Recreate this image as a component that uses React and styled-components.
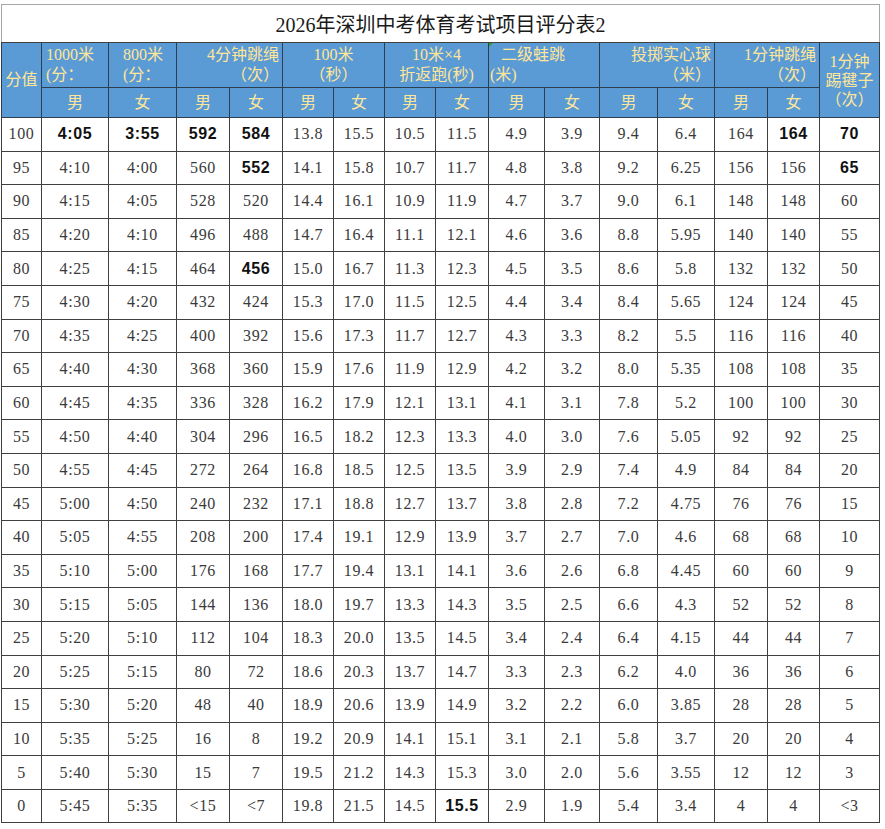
import React from "react";
import styled, { createGlobalStyle } from "styled-components";

const Global = createGlobalStyle`
  html, body { margin: 0; padding: 0; background: #ffffff; }
  body { font-family: "Liberation Serif", "Noto Sans CJK SC", serif; }
`;

const Page = styled.div`
  padding: 4px 0 0 1px;
`;

const Table = styled.table`
  border-collapse: collapse;
  table-layout: fixed;
  width: 878px;
  font-family: "Liberation Serif", "Noto Sans CJK SC", serif;
`;

const TitleCell = styled.td`
  height: 38px;
  box-sizing: border-box;
  padding: 0;
  border: 1px solid #a6a6a6;
  border-bottom: 1px solid #404040;
  text-align: center;
  font-size: 20px;
  color: #1a1a1a;
  background: #ffffff;
`;

const HeadCell = styled.td`
  position: relative;
  box-sizing: border-box;
  height: ${(p) => p.$h || 45}px;
  padding: ${(p) => (p.$align === "right" ? "0 3px 0 0" : "0")};
  background: #5b9bd5;
  color: #ffe699;
  border: 1px solid #2d3e50;
  font-size: 16px;
  line-height: ${(p) => p.$lh || 20}px;
  text-align: ${(p) => p.$align || "center"};
  vertical-align: middle;
  white-space: nowrap;
  overflow: hidden;
`;

const Line = styled.div`
  padding-left: ${(p) => p.$indent || 0}px;
`;

const Mark = styled.span`
  position: absolute;
  left: 0;
  top: 0;
  width: 0;
  height: 0;
  border-top: 4px solid #2e9d3a;
  border-right: 4px solid transparent;
`;

const Cell = styled.td`
  box-sizing: border-box;
  height: 33.6px;
  padding: 0;
  border: 1px solid #404040;
  text-align: center;
  vertical-align: middle;
  font-size: 16px;
  letter-spacing: 0.6px;
  color: ${(p) => (p.$bold ? "#111111" : "#3a3a3a")};
  font-family: ${(p) =>
    p.$bold ? '"Liberation Sans", Arial, sans-serif' : '"Liberation Serif", serif'};
  font-weight: ${(p) => (p.$bold ? 700 : 400)};
  background: #ffffff;
`;

const widths = [40, 67, 68, 53, 53, 51, 51, 51, 53, 56, 55, 58, 57, 53, 52, 60];

const rows = [
  ["100", "4:05", "3:55", "592", "584", "13.8", "15.5", "10.5", "11.5", "4.9", "3.9", "9.4", "6.4", "164", "164", "70"],
  ["95", "4:10", "4:00", "560", "552", "14.1", "15.8", "10.7", "11.7", "4.8", "3.8", "9.2", "6.25", "156", "156", "65"],
  ["90", "4:15", "4:05", "528", "520", "14.4", "16.1", "10.9", "11.9", "4.7", "3.7", "9.0", "6.1", "148", "148", "60"],
  ["85", "4:20", "4:10", "496", "488", "14.7", "16.4", "11.1", "12.1", "4.6", "3.6", "8.8", "5.95", "140", "140", "55"],
  ["80", "4:25", "4:15", "464", "456", "15.0", "16.7", "11.3", "12.3", "4.5", "3.5", "8.6", "5.8", "132", "132", "50"],
  ["75", "4:30", "4:20", "432", "424", "15.3", "17.0", "11.5", "12.5", "4.4", "3.4", "8.4", "5.65", "124", "124", "45"],
  ["70", "4:35", "4:25", "400", "392", "15.6", "17.3", "11.7", "12.7", "4.3", "3.3", "8.2", "5.5", "116", "116", "40"],
  ["65", "4:40", "4:30", "368", "360", "15.9", "17.6", "11.9", "12.9", "4.2", "3.2", "8.0", "5.35", "108", "108", "35"],
  ["60", "4:45", "4:35", "336", "328", "16.2", "17.9", "12.1", "13.1", "4.1", "3.1", "7.8", "5.2", "100", "100", "30"],
  ["55", "4:50", "4:40", "304", "296", "16.5", "18.2", "12.3", "13.3", "4.0", "3.0", "7.6", "5.05", "92", "92", "25"],
  ["50", "4:55", "4:45", "272", "264", "16.8", "18.5", "12.5", "13.5", "3.9", "2.9", "7.4", "4.9", "84", "84", "20"],
  ["45", "5:00", "4:50", "240", "232", "17.1", "18.8", "12.7", "13.7", "3.8", "2.8", "7.2", "4.75", "76", "76", "15"],
  ["40", "5:05", "4:55", "208", "200", "17.4", "19.1", "12.9", "13.9", "3.7", "2.7", "7.0", "4.6", "68", "68", "10"],
  ["35", "5:10", "5:00", "176", "168", "17.7", "19.4", "13.1", "14.1", "3.6", "2.6", "6.8", "4.45", "60", "60", "9"],
  ["30", "5:15", "5:05", "144", "136", "18.0", "19.7", "13.3", "14.3", "3.5", "2.5", "6.6", "4.3", "52", "52", "8"],
  ["25", "5:20", "5:10", "112", "104", "18.3", "20.0", "13.5", "14.5", "3.4", "2.4", "6.4", "4.15", "44", "44", "7"],
  ["20", "5:25", "5:15", "80", "72", "18.6", "20.3", "13.7", "14.7", "3.3", "2.3", "6.2", "4.0", "36", "36", "6"],
  ["15", "5:30", "5:20", "48", "40", "18.9", "20.6", "13.9", "14.9", "3.2", "2.2", "6.0", "3.85", "28", "28", "5"],
  ["10", "5:35", "5:25", "16", "8", "19.2", "20.9", "14.1", "15.1", "3.1", "2.1", "5.8", "3.7", "20", "20", "4"],
  ["5", "5:40", "5:30", "15", "7", "19.5", "21.2", "14.3", "15.3", "3.0", "2.0", "5.6", "3.55", "12", "12", "3"],
  ["0", "5:45", "5:35", "<15", "<7", "19.8", "21.5", "14.5", "15.5", "2.9", "1.9", "5.4", "3.4", "4", "4", "<3"],
];

const bold = new Set(["0-1", "0-2", "0-3", "0-4", "0-14", "0-15", "1-4", "1-15", "4-4", "20-8"]);

const genders = ["男", "女", "男", "女", "男", "女", "男", "女", "男", "女", "男", "女", "男", "女"];

export default function App() {
  return (
    <Page>
      <Global />
      <Table>
        <colgroup>
          {widths.map((w, i) => (
            <col key={i} style={{ width: w }} />
          ))}
        </colgroup>
        <tbody>
          <tr>
            <TitleCell colSpan={16}>2026年深圳中考体育考试项目评分表2</TitleCell>
          </tr>
          <tr>
            <HeadCell rowSpan={2} $h={75}>分值</HeadCell>
            <HeadCell $align="left">
              <Line $indent={4}>1000米</Line>
              <Line $indent={4}>(分：</Line>
            </HeadCell>
            <HeadCell $align="left">
              <Line $indent={14}>800米</Line>
              <Line $indent={14}>(分：</Line>
            </HeadCell>
            <HeadCell colSpan={2} $align="right">
              <Line>4分钟跳绳</Line>
              <Line>（次）</Line>
            </HeadCell>
            <HeadCell colSpan={2}>
              <Line>100米</Line>
              <Line>（秒）</Line>
            </HeadCell>
            <HeadCell colSpan={2}>
              <Line>10米×4</Line>
              <Line>折返跑(秒)</Line>
            </HeadCell>
            <HeadCell colSpan={2} $align="left">
              <Mark />
              <Line $indent={12}>二级蛙跳</Line>
              <Line $indent={1}>(米)</Line>
            </HeadCell>
            <HeadCell colSpan={2} $align="right">
              <Line>投掷实心球</Line>
              <Line>（米）</Line>
            </HeadCell>
            <HeadCell colSpan={2} $align="right">
              <Line>1分钟跳绳</Line>
              <Line>（次）</Line>
            </HeadCell>
            <HeadCell rowSpan={2} $h={75} $lh={19}>
              <Line>1分钟</Line>
              <Line>踢毽子</Line>
              <Line>（次）</Line>
            </HeadCell>
          </tr>
          <tr>
            {genders.map((g, i) => (
              <HeadCell key={i} $h={30}>
                {g}
              </HeadCell>
            ))}
          </tr>
          {rows.map((r, ri) => (
            <tr key={ri}>
              {r.map((v, ci) => (
                <Cell key={ci} $bold={bold.has(`${ri}-${ci}`)}>
                  {v}
                </Cell>
              ))}
            </tr>
          ))}
        </tbody>
      </Table>
    </Page>
  );
}
